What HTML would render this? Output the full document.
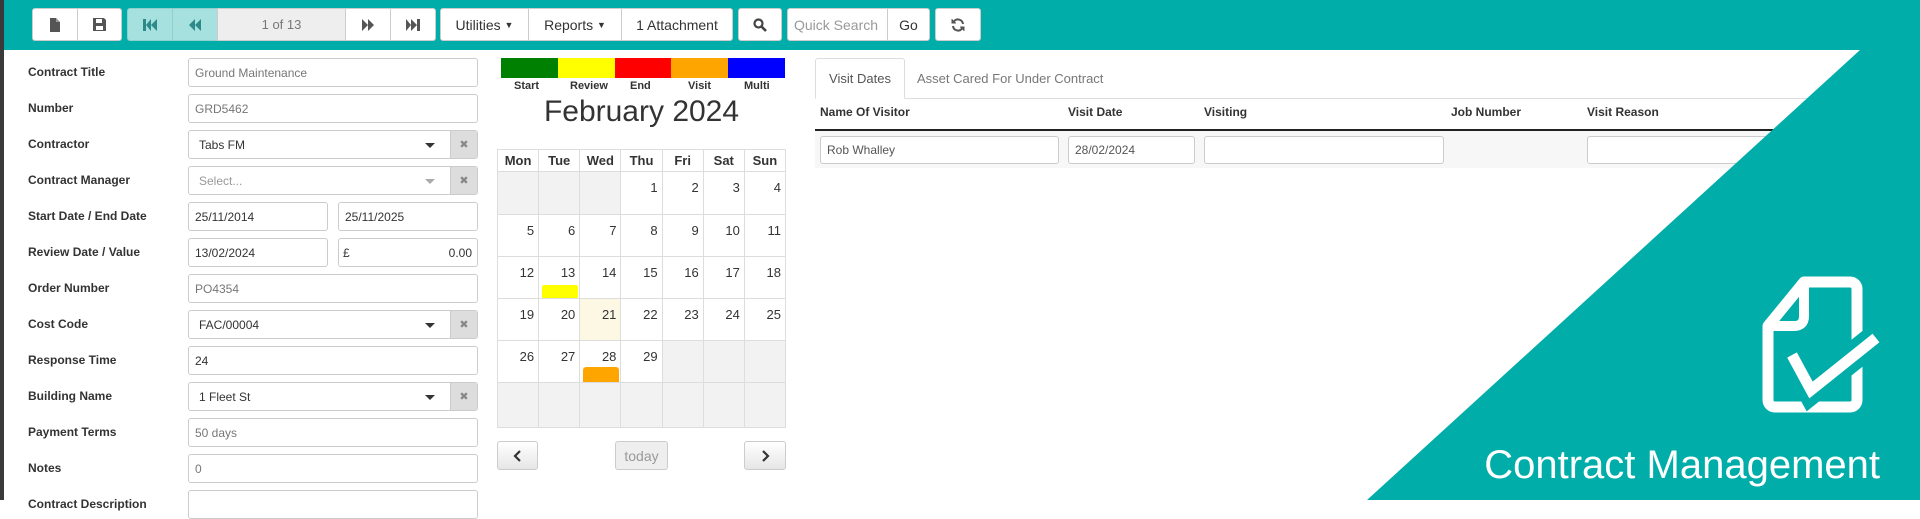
<!DOCTYPE html>
<html><head><meta charset="utf-8"><style>
*{box-sizing:border-box;margin:0;padding:0}
body{width:1920px;height:500px;overflow:hidden;background:#fff;font-family:"Liberation Sans",Arial,sans-serif;position:relative;color:#333}
.a{position:absolute}
#hdr{left:0;top:0;width:1920px;height:50px;background:#00ada9}
#strip{left:0;top:0;width:4px;height:500px;background:#3a3a3a;z-index:5}
.btn{position:absolute;top:8px;height:33px;background:#fff;border:1px solid #ccc;font-size:14px;color:#333;display:flex;align-items:center;justify-content:center}
.tl{background:#a6e1e0;border-color:#8fcfcd}
.lbl{position:absolute;left:28px;font-size:12px;font-weight:bold;color:#333}
.inp{position:absolute;left:188px;width:290px;height:29px;border:1px solid #ccc;border-radius:3px;font-size:12px;color:#777;padding:0 6px;display:flex;align-items:center;background:#fff}
.dk{color:#333}
.sel .x{position:absolute;right:0;top:0;width:27px;height:27px;background:#ddd;border-left:1px solid #ccc;color:#888;font-size:11px;display:flex;align-items:center;justify-content:center}
.sel .c{position:absolute;right:42px;top:12px;border-left:5px solid transparent;border-right:5px solid transparent;border-top:5px solid #333}
.sel{padding-left:10px}
table.cal{position:absolute;left:497px;top:149px;border-collapse:collapse;width:289px;table-layout:fixed}
.cal td,.cal th{border:1px solid #ddd;font-size:13px;vertical-align:top;text-align:right;padding:8px 4px 0 0;position:relative}
.cal th{text-align:center;padding:3px 0;height:21px;font-weight:bold}
.cal td.g{background:#f2f2f2}
.cal td.t{background:#fcf8e3}
.cb{position:absolute;top:441px;height:29px;border:1px solid #ccc;border-radius:3px;background:linear-gradient(#fff,#e6e6e6);display:flex;align-items:center;justify-content:center;font-size:14px}
.th{position:absolute;top:105px;font-size:12px;font-weight:bold;color:#333}
.ri{position:absolute;top:136px;height:28px;border:1px solid #ccc;border-radius:3px;background:#fff;font-size:12px;color:#555;padding-left:6px;display:flex;align-items:center}
</style></head><body>
<div id="strip" class="a"></div>
<div id="hdr" class="a"></div>
<!-- toolbar -->
<div class="btn" style="left:32px;width:46px;border-radius:3px 0 0 3px"><svg width="12" height="14" viewBox="0 0 12 14"><path d="M1 0H7L11 4V14H1Z" fill="#555"/><path d="M7 0V4H11" fill="#999"/></svg></div>
<div class="btn" style="left:77px;width:45px;border-radius:0 3px 3px 0"><svg width="13" height="13" viewBox="0 0 13 13"><path d="M0 0H11L13 2V13H0Z" fill="#555"/><rect x="3" y="1" width="6" height="4" fill="#fff"/><rect x="3" y="8" width="7" height="4" fill="#fff"/></svg></div>
<div class="btn tl" style="left:127px;width:46px;border-radius:3px 0 0 3px"><svg width="14" height="12" viewBox="0 0 14 12"><rect x="0" y="0" width="3" height="12" fill="#2d8a88"/><path d="M3 6L8 0V12ZM8 6L14 0V12Z" fill="#2d8a88"/></svg></div>
<div class="btn tl" style="left:172px;width:46px;border-radius:0"><svg width="12" height="12" viewBox="0 0 12 12"><path d="M0 6L6 0V12ZM6 6L12 0V12Z" fill="#2d8a88"/></svg></div>
<div class="btn" style="left:217px;width:129px;background:#eee;color:#777;font-size:13px;border-radius:0">1 of 13</div>
<div class="btn" style="left:345px;width:46px;border-radius:0"><svg width="12" height="12" viewBox="0 0 12 12"><path d="M0 0L6 6L0 12ZM6 0L12 6L6 12Z" fill="#555"/></svg></div>
<div class="btn" style="left:390px;width:46px;border-radius:0 3px 3px 0"><svg width="14" height="12" viewBox="0 0 14 12"><path d="M0 0L5 6L0 12ZM5 0L11 6L5 12Z" fill="#555"/><rect x="11" y="0" width="3" height="12" fill="#555"/></svg></div>
<div class="btn" style="left:440px;width:89px;border-radius:3px 0 0 3px">Utilities&nbsp;<span style="font-size:9px">▼</span></div>
<div class="btn" style="left:528px;width:94px;border-radius:0">Reports&nbsp;<span style="font-size:9px">▼</span></div>
<div class="btn" style="left:621px;width:112px;border-radius:0 3px 3px 0">1 Attachment</div>
<div class="btn" style="left:738px;width:44px;border-radius:3px"><svg width="14" height="14" viewBox="0 0 14 14"><circle cx="5.5" cy="5.5" r="4" stroke="#444" stroke-width="2.2" fill="none"/><path d="M8.5 8.5L13 13" stroke="#444" stroke-width="2.6"/></svg></div>
<div class="btn" style="left:787px;width:101px;border-radius:3px 0 0 3px;color:#999;justify-content:flex-start;padding-left:6px">Quick Search</div>
<div class="btn" style="left:887px;width:43px;border-radius:0 3px 3px 0">Go</div>
<div class="btn" style="left:935px;width:46px;border-radius:3px"><svg width="14" height="14" viewBox="0 0 14 14" fill="none" stroke="#555" stroke-width="2"><path d="M12 6A5 5 0 0 0 3 3.5"/><path d="M2 8A5 5 0 0 0 11 10.5"/><path d="M1 1V5H5" fill="#555" stroke-width="1"/><path d="M13 13V9H9" fill="#555" stroke-width="1"/></svg></div>

<!-- form -->
<div class="lbl" style="top:65px">Contract Title</div><div class="inp" style="top:58px">Ground Maintenance</div>
<div class="lbl" style="top:101px">Number</div><div class="inp" style="top:94px">GRD5462</div>
<div class="lbl" style="top:137px">Contractor</div><div class="inp sel dk" style="top:130px">Tabs FM<span class="c"></span><span class="x">✖</span></div>
<div class="lbl" style="top:173px">Contract Manager</div><div class="inp sel" style="top:166px;color:#999">Select...<span class="c" style="border-top-color:#aaa"></span><span class="x">✖</span></div>
<div class="lbl" style="top:209px">Start Date / End Date</div><div class="inp dk" style="top:202px;width:140px">25/11/2014</div><div class="inp dk" style="top:202px;left:338px;width:140px">25/11/2025</div>
<div class="lbl" style="top:245px">Review Date / Value</div><div class="inp dk" style="top:238px;width:140px">13/02/2024</div><div class="inp dk" style="top:238px;left:338px;width:140px;justify-content:space-between;padding:0 5px 0 4px"><span>£</span><span>0.00</span></div>
<div class="lbl" style="top:281px">Order Number</div><div class="inp" style="top:274px">PO4354</div>
<div class="lbl" style="top:317px">Cost Code</div><div class="inp sel dk" style="top:310px">FAC/00004<span class="c"></span><span class="x">✖</span></div>
<div class="lbl" style="top:353px">Response Time</div><div class="inp dk" style="top:346px">24</div>
<div class="lbl" style="top:389px">Building Name</div><div class="inp sel dk" style="top:382px">1 Fleet St<span class="c"></span><span class="x">✖</span></div>
<div class="lbl" style="top:425px">Payment Terms</div><div class="inp" style="top:418px">50 days</div>
<div class="lbl" style="top:461px">Notes</div><div class="inp" style="top:454px">0</div>
<div class="lbl" style="top:497px">Contract Description</div><div class="inp" style="top:490px"></div>

<!-- calendar legend -->
<div class="a" style="left:501px;top:58px;width:57px;height:20px;background:#008000"></div>
<div class="a" style="left:558px;top:58px;width:57px;height:20px;background:#ff0"></div>
<div class="a" style="left:615px;top:58px;width:56px;height:20px;background:#f00"></div>
<div class="a" style="left:671px;top:58px;width:57px;height:20px;background:#ffa500"></div>
<div class="a" style="left:728px;top:58px;width:57px;height:20px;background:#00f"></div>
<div class="a" style="top:80px;left:0;font-size:11px;font-weight:bold;color:#333">
<span class="a" style="left:514px">Start</span><span class="a" style="left:570px">Review</span><span class="a" style="left:630px">End</span><span class="a" style="left:688px">Visit</span><span class="a" style="left:744px">Multi</span></div>
<div class="a" style="left:497px;width:289px;top:95px;text-align:center;font-size:30px;color:#333">February 2024</div>
<table class="cal">
<tr><th>Mon</th><th>Tue</th><th>Wed</th><th>Thu</th><th>Fri</th><th>Sat</th><th>Sun</th></tr>
<tr style="height:43px"><td class="g"></td><td class="g"></td><td class="g"></td><td>1</td><td>2</td><td>3</td><td>4</td></tr>
<tr style="height:42px"><td>5</td><td>6</td><td>7</td><td>8</td><td>9</td><td>10</td><td>11</td></tr>
<tr style="height:42px"><td>12</td><td>13<div class="a" style="left:3px;bottom:0;width:36px;height:13px;background:#ff0;border-radius:2px 2px 0 0"></div></td><td>14</td><td>15</td><td>16</td><td>17</td><td>18</td></tr>
<tr style="height:42px"><td>19</td><td>20</td><td class="t">21</td><td>22</td><td>23</td><td>24</td><td>25</td></tr>
<tr style="height:42px"><td>26</td><td>27</td><td>28<div class="a" style="left:3px;bottom:0;width:36px;height:15px;background:#ffa500;border-radius:3px 3px 0 0"></div></td><td>29</td><td class="g"></td><td class="g"></td><td class="g"></td></tr>
<tr style="height:45px"><td class="g"></td><td class="g"></td><td class="g"></td><td class="g"></td><td class="g"></td><td class="g"></td><td class="g"></td></tr>
</table>
<div class="cb" style="left:497px;width:41px"><svg width="9" height="12" viewBox="0 0 9 12"><path d="M7 1L2 6L7 11" stroke="#333" stroke-width="2.2" fill="none"/></svg></div>
<div class="cb" style="left:615px;width:53px;background:#eee;color:#999">today</div>
<div class="cb" style="left:744px;width:42px"><svg width="9" height="12" viewBox="0 0 9 12"><path d="M2 1L7 6L2 11" stroke="#333" stroke-width="2.2" fill="none"/></svg></div>

<!-- right tabs -->
<div class="a" style="left:815px;top:98px;width:1105px;height:1px;background:#ddd"></div>
<div class="a" style="left:815px;top:58px;width:90px;height:41px;border:1px solid #ddd;border-bottom-color:#fff;border-radius:3px 3px 0 0;background:#fff;font-size:13px;color:#555;display:flex;align-items:center;justify-content:center">Visit Dates</div>
<div class="a" style="left:917px;top:71px;font-size:13px;color:#777">Asset Cared For Under Contract</div>
<div class="th" style="left:820px">Name Of Visitor</div>
<div class="th" style="left:1068px">Visit Date</div>
<div class="th" style="left:1204px">Visiting</div>
<div class="th" style="left:1451px">Job Number</div>
<div class="th" style="left:1587px">Visit Reason</div>
<div class="a" style="left:815px;top:129px;width:1105px;height:2px;background:#222"></div>
<div class="a" style="left:815px;top:131px;width:1105px;height:37px;background:#f7f7f7"></div>
<div class="ri" style="left:820px;width:239px">Rob Whalley</div>
<div class="ri" style="left:1068px;width:127px">28/02/2024</div>
<div class="ri" style="left:1204px;width:240px"></div>
<div class="ri" style="left:1587px;width:300px"></div>

<!-- triangle + logo -->
<svg class="a" style="left:0;top:0" width="1920" height="500" viewBox="0 0 1920 500">
<polygon points="1860,50 1920,50 1920,500 1367,500" fill="#00ada9"/>
<path d="M1804,282 H1850 a7,7 0 0 1 7,7 V400 a7,7 0 0 1 -7,7 H1775 a7,7 0 0 1 -7,-7 V326 Z" fill="none" stroke="#fff" stroke-width="11" stroke-linejoin="round"/>
<path d="M1804,282 V316 Q1804,326 1794,326 H1768" fill="none" stroke="#fff" stroke-width="10"/>
<path d="M1792,355 L1811,390 L1876,338" fill="none" stroke="#00ada9" stroke-width="28"/>
<path d="M1792,355 L1811,390 L1876,338" fill="none" stroke="#fff" stroke-width="11"/>
<text x="1880" y="478" text-anchor="end" font-family="Liberation Sans, sans-serif" font-size="40" fill="#fff">Contract Management</text>
</svg>
</body></html>
